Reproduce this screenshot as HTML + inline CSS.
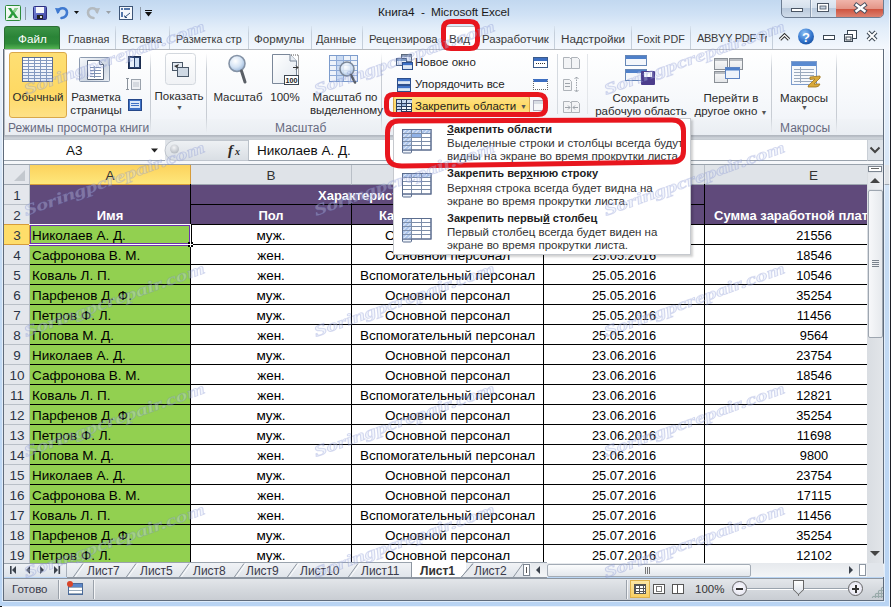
<!DOCTYPE html>
<html><head><meta charset="utf-8">
<style>
*{box-sizing:border-box;margin:0;padding:0}
html,body{width:891px;height:607px;overflow:hidden}
body{position:relative;font-family:"Liberation Sans",sans-serif;font-size:11.5px;color:#1e1e1e;background:#c6d9f0}
.a{position:absolute}
.t{position:absolute;white-space:nowrap}
#frame{left:0;top:0;width:891px;height:607px;background:linear-gradient(#c2d8f0 0px,#cfe1f5 14px,#e2edf9 28px,#f3f7fd 48px,#e4eefa 100px,#c6dcf4 250px,#b9d4f3 607px)}
#title{left:378px;top:5px;font-size:11.8px;letter-spacing:-0.1px;color:#1a1a1a}
.tab{position:absolute;white-space:nowrap;top:32px;font-size:11.7px;color:#3a3a3a}
.tsep{position:absolute;top:26px;width:1px;height:23px;background:linear-gradient(rgba(197,207,219,.3),#c5cfdb 30%,#c5cfdb)}
#ribbon{left:4px;top:49px;width:880px;height:87px;background:linear-gradient(#ffffff,#f6f8fb 60%,#eef2f7);border:1px solid #b6babf;border-bottom:none}
.glab{position:absolute;top:121px;font-size:12px;color:#676a80}
.gsep{position:absolute;top:53px;width:1px;height:80px;background:linear-gradient(rgba(200,205,212,0),#c8cdd4 20%,#c8cdd4 80%,rgba(200,205,212,0))}
.btxt{position:absolute;font-size:11.5px;color:#2a2a2a;text-align:center;line-height:13px;white-space:nowrap;padding-top:1px}
#grid{left:4px;top:164px;width:880px;height:400px;background:#fff}
.ch{position:absolute;top:165px;height:20px;background:#dfe3e8;border-right:1px solid #b9bfc7;border-bottom:1px solid #9ea6b0;font-size:13.5px;color:#333;text-align:center;line-height:22px}
.rh{position:absolute;left:4px;width:26px;height:20px;background:#e4e7ec;border-bottom:1px solid #b9bfc7;border-right:1px solid #b9bfc7;font-size:13.5px;color:#2b3445;text-align:center;line-height:22px;padding-left:1px}
.c{position:absolute;height:20px;font-size:13.5px;line-height:24px;white-space:nowrap;overflow:hidden;color:#000}
.ctr{text-align:center}
.rt{text-align:right;padding-right:57px}
</style></head><body>
<div id="frame" class="a"></div>

<!-- Title bar / QAT -->
<svg class="a" style="left:0;top:0" width="160" height="26" viewBox="0 0 160 26">
<defs>
<linearGradient id="xg" x1="0" y1="0" x2="1" y2="1"><stop offset="0" stop-color="#ffffff"/><stop offset="1" stop-color="#d8ead8"/></linearGradient>
<linearGradient id="sg" x1="0" y1="0" x2="1" y2="1"><stop offset="0" stop-color="#7d8fe0"/><stop offset="1" stop-color="#3b3f9e"/></linearGradient>
</defs>
<rect x="5.5" y="5.5" width="15" height="15" rx="1" fill="url(#xg)" stroke="#2e8b3c"/>
<path d="M8 8 L11 8 L13 11.2 L15 8 L18 8 L14.6 13 L18.2 18 L15 18 L13 14.8 L11 18 L7.8 18 L11.4 13 Z" fill="#2a9a3a"/>
<path d="M15 8 L18 8 L14.6 13 L13 11.2 Z" fill="#8fd18f"/>
<rect x="25" y="7" width="1" height="13" fill="#8e9aa8"/>
<rect x="33.5" y="6.5" width="13" height="13" rx="1" fill="url(#sg)" stroke="#2c2f80"/>
<rect x="36" y="7" width="8" height="6" fill="#f4f6fb"/>
<rect x="37" y="15" width="6" height="4" fill="#222"/>
<rect x="40" y="16" width="2" height="2" fill="#ddd"/>
<path d="M58 12 C58 7.5 67 6.5 67 12.5 C67 15.5 64.5 17.5 61.5 18" fill="none" stroke="#3f79d0" stroke-width="2.6" stroke-linecap="round"/>
<path d="M55 8 L61.5 8.5 L57.5 14 Z" fill="#3f79d0"/>
<path d="M74 11 L79 11 L76.5 14 Z" fill="#111"/>
<path d="M97 12 C97 7.5 88 6.5 88 12.5 C88 15.5 90.5 17.5 93.5 18" fill="none" stroke="#b4babf" stroke-width="2.6" stroke-linecap="round"/>
<path d="M100 8 L93.5 8.5 L97.5 14 Z" fill="#b4babf"/>
<path d="M106 11 L111 11 L108.5 14 Z" fill="#9aa0a6"/>
<rect x="119.5" y="6.5" width="13" height="13" fill="#f6f8fb" stroke="#3d5577"/>
<rect x="121" y="8" width="2" height="2" fill="#5577aa"/><rect x="124" y="8" width="6" height="2" fill="#5577aa"/>
<rect x="121" y="12" width="2" height="5" fill="#5577aa"/>
<path d="M125 17 L130 13" stroke="#33507a" stroke-width="1"/><path d="M124.5 15.5 L125 17.5 L127 17.5" fill="none" stroke="#33507a"/>
<rect x="140" y="7" width="1" height="13" fill="#8e9aa8"/>
<rect x="145" y="10" width="7" height="1" fill="#111"/>
<path d="M145 12 L152 12 L148.5 16.5 Z" fill="#111"/>
</svg>
<div id="title" class="t">Книга4&nbsp; -&nbsp; Microsoft Excel</div>

<!-- window buttons -->
<div class="a" style="left:781px;top:-2px;width:103px;height:20px;border:1px solid #6d7d92;border-radius:0 0 5px 5px;background:linear-gradient(#e4ebf4,#d5e0ec 50%,#b9c9dc 52%,#d0dcea);overflow:hidden">
  <div class="a" style="left:28px;top:0;width:1px;height:20px;background:#8b9bb0;box-shadow:1px 0 0 rgba(255,255,255,.6)"></div>
  <div class="a" style="left:54px;top:0;width:48px;height:20px;background:linear-gradient(#f1b8ae,#e39486 50%,#cf5541 52%,#e08d7c)"></div>
</div>
<svg class="a" style="left:781px;top:0" width="103" height="18" viewBox="0 0 103 18">
<rect x="10.5" y="8.5" width="11" height="3" fill="#fff" stroke="#4a5564"/>
<rect x="36.5" y="3.5" width="11" height="8" fill="#fff" stroke="#4a5564"/>
<rect x="39" y="6" width="6" height="3" fill="#c8d3e0" stroke="#4a5564" stroke-width=".8"/>
<path d="M75.5 5 L83.5 11 M83.5 5 L75.5 11" stroke="#4a5060" stroke-width="4.4" stroke-linecap="square"/>
<path d="M75.5 5 L83.5 11 M83.5 5 L75.5 11" stroke="#fff" stroke-width="2.4" stroke-linecap="square"/>
</svg>
<!-- Tabs -->
<div class="a" style="left:4px;top:26px;width:56px;height:23px;background:linear-gradient(#3d9447,#2a8437 45%,#2f8a3a 75%,#55b552);border:1px solid #2b6f33;border-bottom:none;border-radius:3px 3px 0 0"></div>
<div class="t" style="left:18px;top:32px;color:#fff;font-size:11.7px">Файл</div>
<div class="tab" style="left:68px;transform:scaleX(0.93);transform-origin:0 0">Главная</div>
<div class="tsep" style="left:115px"></div>
<div class="tab" style="left:122px;transform:scaleX(0.92);transform-origin:0 0">Вставка</div>
<div class="tsep" style="left:169px"></div>
<div class="tab" style="left:176px;transform:scaleX(0.92);transform-origin:0 0">Разметка стр</div>
<div class="tsep" style="left:248px"></div>
<div class="tab" style="left:254px;transform:scaleX(0.99);transform-origin:0 0">Формулы</div>
<div class="tsep" style="left:311px"></div>
<div class="tab" style="left:316px;transform:scaleX(0.95);transform-origin:0 0">Данные</div>
<div class="tsep" style="left:362px"></div>
<div class="tab" style="left:369px;transform:scaleX(0.97);transform-origin:0 0">Рецензирова</div>
<div class="a" style="left:444px;top:26px;width:34px;height:24px;background:#fff;border:1px solid #b6babf;border-bottom:none;border-radius:2px 2px 0 0"></div>
<div class="tab" style="left:449px">Вид</div>
<div class="tab" style="left:482px;transform:scaleX(0.98);transform-origin:0 0">Разработчик</div>
<div class="tsep" style="left:554px"></div>
<div class="tab" style="left:561px">Надстройки</div>
<div class="tsep" style="left:631px"></div>
<div class="tab" style="left:637px;transform:scaleX(0.92);transform-origin:0 0">Foxit PDF</div>
<div class="tsep" style="left:690px"></div>
<div class="tab" style="left:697px;width:70px;overflow:hidden;font-size:11px;letter-spacing:-0.3px">ABBYY PDF Transformer</div>
<div class="tsep" style="left:772px"></div>
<!-- right tab icons -->
<svg class="a" style="left:776px;top:26px" width="108" height="22" viewBox="0 0 108 22">
<path d="M4 13.5 L8.5 9 L13 13.5" fill="none" stroke="#333" stroke-width="3.2" stroke-linejoin="miter"/>
<path d="M4 13.5 L8.5 9 L13 13.5" fill="none" stroke="#fff" stroke-width="1.2"/>
<defs><radialGradient id="hg" cx=".4" cy=".3" r=".7"><stop offset="0" stop-color="#8cc0f4"/><stop offset=".7" stop-color="#3274cc"/><stop offset="1" stop-color="#1f58a8"/></radialGradient></defs>
<circle cx="30" cy="10.5" r="8" fill="url(#hg)"/>
<text x="26" y="15.5" font-family="Liberation Sans" font-weight="bold" font-size="13" fill="#fff">?</text>
<rect x="47.5" y="9.5" width="11" height="4" fill="#fff" stroke="#3a4652"/>
<rect x="71.5" y="4.5" width="9" height="8" fill="#fff" stroke="#3a4652"/>
<rect x="68.5" y="8.5" width="8" height="7" fill="#fff" stroke="#3a4652"/>
<rect x="70" y="11" width="5" height="3" fill="none" stroke="#3a4652"/>
<path d="M92 6 L100 14 M100 6 L92 14" stroke="#3a4652" stroke-width="4"/>
<path d="M92 6 L100 14 M100 6 L92 14" stroke="#fff" stroke-width="2"/>
</svg>
<!-- Ribbon -->
<div id="ribbon" class="a"></div>
<div class="a" style="left:5px;top:119px;width:878px;height:17px;background:linear-gradient(#f0f3f7,#e9edf2)"></div>
<div class="a" style="left:4px;top:135px;width:880px;height:5px;background:linear-gradient(#aab0b8,#d0d5dc 40%,#c5cbd3)"></div>

<div class="gsep" style="left:150px"></div>
<div class="gsep" style="left:206px"></div>
<div class="gsep" style="left:381px"></div>
<div class="gsep" style="left:771px"></div>
<div class="gsep" style="left:836px"></div>
<div class="a" style="left:557px;top:54px;width:1px;height:60px;background:#d5dae0"></div>
<div class="a" style="left:587px;top:54px;width:1px;height:60px;background:#e3e6ea"></div>

<!-- group 1 -->
<div class="a" style="left:9px;top:52px;width:58px;height:66px;border:1px solid #d9a84a;border-radius:3px;background:linear-gradient(#fedf74,#fed964 60%,#fee187)"></div>
<svg class="a" style="left:20px;top:55px" width="125" height="60" viewBox="0 0 125 60">
<defs>
<linearGradient id="ng" x1="0" y1="0" x2="0" y2="1"><stop offset="0" stop-color="#ffffff"/><stop offset="1" stop-color="#e4ecf7"/></linearGradient>
<linearGradient id="pg" x1="0" y1="0" x2="1" y2="1"><stop offset="0" stop-color="#f7f9fc"/><stop offset=".6" stop-color="#cdd6e2"/><stop offset="1" stop-color="#e9eef4"/></linearGradient>
</defs>
<rect x="2.5" y="2.5" width="30" height="24" fill="url(#ng)" stroke="#5c6e90"/>
<g stroke="#8299c0" stroke-width="1">
<line x1="8.5" y1="3" x2="8.5" y2="26"/><line x1="14.5" y1="3" x2="14.5" y2="26"/><line x1="20.5" y1="3" x2="20.5" y2="26"/><line x1="26.5" y1="3" x2="26.5" y2="26"/>
<line x1="3" y1="5.5" x2="32" y2="5.5"/><line x1="3" y1="8.5" x2="32" y2="8.5"/><line x1="3" y1="11.5" x2="32" y2="11.5"/><line x1="3" y1="14.5" x2="32" y2="14.5"/><line x1="3" y1="17.5" x2="32" y2="17.5"/><line x1="3" y1="20.5" x2="32" y2="20.5"/><line x1="3" y1="23.5" x2="32" y2="23.5"/>
</g>
<rect x="59.5" y="2.5" width="30" height="24" rx="1" fill="url(#pg)" stroke="#8d9bb0"/>
<path d="M67.5 5.5 L79.5 5.5 L83.5 9.5 L83.5 24.5 L67.5 24.5 Z" fill="#fff" stroke="#59677c"/>
<path d="M79.5 5.5 L79.5 9.5 L83.5 9.5" fill="#dfe6ef" stroke="#59677c"/>
<g stroke="#7f92b3"><line x1="70" y1="12.5" x2="81" y2="12.5"/><line x1="70" y1="15.5" x2="81" y2="15.5"/><line x1="70" y1="18.5" x2="81" y2="18.5"/><line x1="70" y1="21.5" x2="81" y2="21.5"/><line x1="74.5" y1="11" x2="74.5" y2="23"/></g>
<rect x="108.5" y="1.5" width="12" height="12" fill="#29416e" stroke="#1b2c4f"/>
<rect x="110" y="3" width="4" height="9" fill="#e8f0fb"/><rect x="115" y="3" width="4" height="9" fill="#cfe0f5"/>
<rect x="111.5" y="24.5" width="9" height="10" fill="#eef0f3" stroke="#9aa2ac"/><rect x="113" y="27" width="6" height="5" fill="#d5d9df"/>
<path d="M107.5 23 L107.5 35 M106 23.5 L109 23.5 M106 34.5 L109 34.5" stroke="#8a929c"/>
<rect x="108.5" y="44.5" width="13" height="11" fill="#3d70c4" stroke="#25478a"/>
<rect x="110" y="46" width="10" height="7" fill="#dbe8f8"/>
<g stroke="#3d70c4"><line x1="111" y1="48.5" x2="119" y2="48.5"/><line x1="111" y1="50.5" x2="119" y2="50.5"/></g>
</svg>
<div class="btxt" style="left:9px;top:90px;width:58px">Обычный</div>
<div class="btxt" style="left:67px;top:90px;width:58px">Разметка<br>страницы</div>
<div class="glab" style="left:8px">Режимы просмотра книги</div>

<!-- group 2 -->
<svg class="a" style="left:160px;top:50px" width="205" height="38" viewBox="0 0 205 38">
<defs>
<linearGradient id="sb" x1="0" y1="0" x2="0" y2="1"><stop offset="0" stop-color="#ffffff"/><stop offset="1" stop-color="#f0f2f5"/></linearGradient>
<radialGradient id="lens" cx=".4" cy=".35" r=".65"><stop offset="0" stop-color="#ffffff"/><stop offset=".6" stop-color="#d4e3f4"/><stop offset="1" stop-color="#9fbadb"/></radialGradient>
<linearGradient id="pg2" x1="0" y1="0" x2="1" y2="1"><stop offset="0" stop-color="#ffffff"/><stop offset="1" stop-color="#e3e9f0"/></linearGradient>
</defs>
<rect x="5.5" y="3.5" width="30" height="31" rx="3" fill="url(#sb)" stroke="#d3d8de"/>
<rect x="12.5" y="12.5" width="10" height="8" fill="#e4eaf1" stroke="#4a5868"/>
<rect x="17.5" y="17.5" width="11" height="9" fill="#cfd9e4" stroke="#4a5868"/>
<path d="M14 16 L19 14 L17 18 Z" fill="#333"/>
<circle cx="77" cy="13.5" r="8" fill="url(#lens)" stroke="#8593a6" stroke-width="1.6"/>
<path d="M81.5 21 L85 32" stroke="#5a5f66" stroke-width="3" stroke-linecap="round"/>
<path d="M112.5 4.5 L130 4.5 L136.5 11 L136.5 33.5 L112.5 33.5 Z" fill="url(#pg2)" stroke="#7a8799"/>
<path d="M130 4.5 L130 11 L136.5 11" fill="#e8edf3" stroke="#7a8799"/>
<path d="M131 5 L138.5 5 L138.5 33.5" fill="none" stroke="#555" stroke-dasharray="1 1"/>
<path d="M133 17.5 L138 17.5 M136 15.5 L138 17.5 L136 19.5" stroke="#333" fill="none"/>
<rect x="124.5" y="25.5" width="14" height="9" fill="#fff" stroke="#3d4652"/>
<text x="125.5" y="32.8" font-family="Liberation Sans" font-size="7.2" font-weight="bold" fill="#222" textLength="12" lengthAdjust="spacingAndGlyphs">100</text>
<rect x="169.5" y="5.5" width="28" height="26" fill="#eef3fa" stroke="#7d9ccc"/>
<rect x="176" y="6" width="7" height="25" fill="#c9daf2"/>
<g stroke="#8eaad6"><line x1="176.5" y1="6" x2="176.5" y2="31"/><line x1="183.5" y1="6" x2="183.5" y2="31"/><line x1="190.5" y1="6" x2="190.5" y2="31"/><line x1="170" y1="10.5" x2="197" y2="10.5"/><line x1="170" y1="15.5" x2="197" y2="15.5"/><line x1="170" y1="20.5" x2="197" y2="20.5"/><line x1="170" y1="25.5" x2="197" y2="25.5"/></g>
<circle cx="187" cy="19" r="7" fill="url(#lens)" fill-opacity=".85" stroke="#7b8798" stroke-width="1.5"/>
<path d="M191 25 L195 32.5" stroke="#5a5f66" stroke-width="2.6" stroke-linecap="round"/>
</svg>
<div class="btxt" style="left:151px;top:89px;width:56px">Показать</div>
<div class="t" style="left:176px;top:104px;font-size:7px;color:#555">&#9660;</div>

<!-- group 3 -->
<div class="btxt" style="left:210px;top:90px;width:56px">Масштаб</div>
<div class="btxt" style="left:266px;top:90px;width:38px">100%</div>
<div class="btxt" style="left:310px;top:90px;width:70px">Масштаб по<br>выделенному</div>
<div class="glab" style="left:275px">Масштаб</div>

<!-- group 4 -->
<svg class="a" style="left:394px;top:53px" width="20" height="40" viewBox="0 0 20 40">
<defs><linearGradient id="wb" x1="0" y1="0" x2="0" y2="1"><stop offset="0" stop-color="#ffffff"/><stop offset="1" stop-color="#cfdcee"/></linearGradient></defs>
<rect x="7.5" y="1.5" width="10" height="7" fill="url(#wb)" stroke="#5c6a7c"/><rect x="8" y="2" width="9" height="2" fill="#8a9ab0"/>
<rect x="2.5" y="5.5" width="10" height="7" fill="url(#wb)" stroke="#4f6485"/><rect x="3" y="6" width="9" height="2" fill="#7f9cc6"/>
<rect x="8.5" y="9.5" width="10" height="7" fill="url(#wb)" stroke="#2d4f8c"/><rect x="9" y="10" width="9" height="2.2" fill="#3f72c8"/>
<rect x="3.5" y="25.5" width="13" height="6" fill="url(#wb)" stroke="#2d4f8c"/><rect x="4" y="26" width="12" height="2.2" fill="#3f72c8"/>
<rect x="3.5" y="32.5" width="13" height="6" fill="url(#wb)" stroke="#2d4f8c"/><rect x="4" y="33" width="12" height="2.2" fill="#3f72c8"/>
</svg>
<div class="t" style="left:415px;top:56px">Новое окно</div>
<div class="t" style="left:415px;top:78px">Упорядочить все</div>
<div class="a" style="left:533px;top:57px;width:15px;height:11px;border:1px solid #3a5a8a;background:linear-gradient(#3d6fc2 0 3px,#fff 3px)"></div>
<div class="a" style="left:536px;top:63px;width:9px;height:1px;border-top:1px dotted #333"></div>
<div class="a" style="left:533px;top:79px;width:15px;height:11px;border:1px dotted #666;border-top:3px solid #3d6fc2;background:#fff"></div>
<div class="a" style="left:533px;top:100px;width:15px;height:11px;border:1px solid #aab;background:linear-gradient(#d8dde4 0 3px,#f6f7f9 3px)"></div>
<svg class="a" style="left:562px;top:55px" width="22" height="60" viewBox="0 0 22 60">
<g fill="#f3f4f6" stroke="#aeb3b9">
<path d="M1.5 2.5 L7.5 2.5 L9.5 4.5 L9.5 13.5 L1.5 13.5 Z"/><path d="M9.5 2.5 L15.5 2.5 L17.5 4.5 L17.5 13.5 L9.5 13.5 Z"/>
<path d="M1.5 24.5 L7.5 24.5 L9.5 26.5 L9.5 35.5 L1.5 35.5 Z"/>
<path d="M1.5 46.5 L7.5 46.5 L9.5 48.5 L9.5 57.5 L1.5 57.5 Z"/><path d="M9.5 46.5 L15.5 46.5 L17.5 48.5 L17.5 57.5 L9.5 57.5 Z"/>
</g>
<g stroke="#9da3aa" fill="none"><line x1="3" y1="28.5" x2="8" y2="28.5"/><line x1="3" y1="31.5" x2="8" y2="31.5"/><line x1="14.5" y1="22" x2="14.5" y2="37" stroke-dasharray="1.5 1"/><path d="M12.5 24 L14.5 22 L16.5 24 M12.5 35 L14.5 37 L16.5 35"/>
<path d="M3 52.5 L8 52.5 M6 50.5 L8 52.5 L6 54.5 M16 52.5 L11 52.5 M13 50.5 L11 52.5 L13 54.5"/></g>
</svg>
<div class="a" style="left:625px;top:55px;width:22px;height:11px;border:1px solid #6687b7;background:linear-gradient(#4f80c9 0 3px,#f3f6fb 3px)"></div>
<div class="a" style="left:625px;top:69px;width:22px;height:12px;border:1px solid #6687b7;background:linear-gradient(#4f80c9 0 3px,#f3f6fb 3px)"></div>
<div class="a" style="left:641px;top:71px;width:14px;height:14px;background:#4c3d8c;border-radius:1px"></div>
<div class="a" style="left:644px;top:72px;width:8px;height:5px;background:#fff"></div>
<div class="btxt" style="left:593px;top:91px;width:96px">Сохранить<br>рабочую область</div>
<div class="btxt" style="left:690px;top:91px;width:82px">Перейти в<br>другое окно <span style="font-size:7px;color:#555">&#9660;</span></div>

<!-- group 5 -->
<svg class="a" style="left:712px;top:56px" width="112" height="32" viewBox="0 0 112 32">
<defs><linearGradient id="gw" x1="0" y1="0" x2="0" y2="1"><stop offset="0" stop-color="#fafafa"/><stop offset="1" stop-color="#e4e6e9"/></linearGradient></defs>
<g stroke="#8a8f96"><rect x="2.5" y="2.5" width="13" height="11" fill="url(#gw)"/><rect x="17.5" y="2.5" width="13" height="11" fill="url(#gw)"/><rect x="2.5" y="15.5" width="13" height="11" fill="url(#gw)"/></g>
<g fill="#b9bdc3"><rect x="3" y="3" width="12" height="2"/><rect x="18" y="3" width="12" height="2"/><rect x="3" y="16" width="12" height="2"/></g>
<rect x="13.5" y="11.5" width="14" height="11" fill="#eef3fb" stroke="#5d84c4"/><rect x="14" y="12" width="13" height="2.5" fill="#4f80c9"/>
<rect x="79.5" y="5.5" width="25" height="23" fill="#f7f9fc" stroke="#7d9ccc"/><rect x="80" y="6" width="24" height="4" fill="#5a8ad0"/>
<g stroke="#9aa9bd"><line x1="82" y1="13.5" x2="102" y2="13.5"/><line x1="82" y1="16.5" x2="102" y2="16.5"/><line x1="82" y1="19.5" x2="102" y2="19.5"/><line x1="82" y1="22.5" x2="102" y2="22.5"/><line x1="82" y1="25.5" x2="102" y2="25.5"/><line x1="88.5" y1="11" x2="88.5" y2="27"/></g>
<path d="M98 21 L108 20 Q109 22 106 24 L102 28 L108 28 Q107 31 104 31 L96 31 Q96 29 99 27 L103 23 L98 23.5 Z" fill="#d9a93a" stroke="#9c7420" stroke-width=".8"/>
</svg>
<div class="btxt" style="left:772px;top:91px;width:64px">Макросы</div>
<div class="t" style="left:801px;top:104px;font-size:7px;color:#555">&#9660;</div>
<div class="glab" style="left:780px">Макросы</div>

<!-- Formula bar -->
<div class="a" style="left:4px;top:136px;width:879px;height:4px;background:linear-gradient(#b3b9c1,#cfd4da 50%,#c3c9d0)"></div>
<div class="a" style="left:4px;top:140px;width:879px;height:24px;background:#dfe3e8"></div>
<div class="a" style="left:4px;top:140px;width:161px;height:21px;background:#fff;border-bottom:1px solid #9aa3ad"></div>
<div class="t" style="left:66px;top:143px;font-size:13.5px;color:#111">A3</div>
<svg class="a" style="left:140px;top:140px" width="110" height="21" viewBox="0 0 110 21">
<path d="M11 8.5 L18 8.5 L14.5 12.5 Z" fill="#222"/>
<defs><linearGradient id="pill" x1="0" y1="0" x2="0" y2="1"><stop offset="0" stop-color="#eef1f4"/><stop offset="1" stop-color="#d9dee4"/></linearGradient>
<radialGradient id="dot" cx=".45" cy=".35" r=".6"><stop offset="0" stop-color="#f4f5f7"/><stop offset="1" stop-color="#b9bec5"/></radialGradient></defs>
<path d="M108 0.5 L35 0.5 A10 10 0 0 0 35 20.5 L108 20.5" fill="url(#pill)" stroke="#c0c6ce"/>
<circle cx="34.5" cy="9" r="4.5" fill="url(#dot)"/>
<text x="88" y="15" font-family="Liberation Serif" font-style="italic" font-weight="bold" font-size="15" fill="#2a2a2a">f</text>
<text x="95" y="15" font-family="Liberation Serif" font-style="italic" font-weight="bold" font-size="10" fill="#2a2a2a">x</text>
</svg>
<div class="a" style="left:248px;top:140px;width:619px;height:21px;background:#fff;border-bottom:1px solid #9aa3ad;border-left:1px solid #b9c0c8"></div>
<div class="t" style="left:257px;top:143px;font-size:13.5px;color:#111">Николаев А. Д.</div>
<div class="a" style="left:867px;top:140px;width:16px;height:21px;background:#dde2e8;border-left:1px solid #c9cfd6;border-bottom:1px solid #9aa3ad"></div>
<svg class="a" style="left:867px;top:140px" width="16" height="21" viewBox="0 0 16 21"><path d="M3.5 7.5 L8 12 L12.5 7.5" fill="none" stroke="#444" stroke-width="2"/></svg>
<div class="a" style="left:4px;top:161px;width:879px;height:3px;background:#f5f7fa"></div>

<!-- Grid -->
<div id="grid" class="a"></div>
<div class="a" style="left:4px;top:164px;width:880px;height:1px;background:#9aa3ad"></div>
<div class="ch" style="left:4px;width:26px;background:#e4e7ec"></div>
<div class="a" style="left:14px;top:170px;width:0;height:0;border-left:11px solid transparent;border-bottom:11px solid #c3c8ce"></div>
<div class="ch" style="left:30px;width:161px;background:linear-gradient(#fcd25c,#fee77c);border-right:1px solid #d69c3a;border-bottom:1px solid #d69c3a;color:#333">A</div>
<div class="ch" style="left:191px;width:161px">B</div>
<div class="ch" style="left:352px;width:192px">C</div>
<div class="ch" style="left:544px;width:161px">D</div>
<div class="ch" style="left:705px;width:218px">E</div>

<div id="rows">
<div class="rh" style="top:185px">1</div>
<div class="rh" style="top:205px">2</div>
<div class="rh" style="top:224px;height:21px;background:#fedd6a;border:1px solid #d69c3a;border-left:none;line-height:21px">3</div>
<div class="rh" style="top:245px">4</div>
<div class="rh" style="top:265px">5</div>
<div class="rh" style="top:285px">6</div>
<div class="rh" style="top:305px">7</div>
<div class="rh" style="top:325px">8</div>
<div class="rh" style="top:345px">9</div>
<div class="rh" style="top:365px">10</div>
<div class="rh" style="top:385px">11</div>
<div class="rh" style="top:405px">12</div>
<div class="rh" style="top:425px">13</div>
<div class="rh" style="top:445px">14</div>
<div class="rh" style="top:465px">15</div>
<div class="rh" style="top:485px">16</div>
<div class="rh" style="top:505px">17</div>
<div class="rh" style="top:525px">18</div>
<div class="rh" style="top:545px">19</div>
<div class="a" style="left:30px;top:185px;width:837px;height:40px;background:#604a7b"></div>
<div class="a" style="left:190px;top:184px;width:1px;height:40px;background:#000"></div>
<div class="a" style="left:191px;top:204px;width:513px;height:1px;background:#000"></div>
<div class="a" style="left:704px;top:184px;width:1px;height:40px;background:#000"></div>
<div class="a" style="left:351px;top:203px;width:1px;height:21px;background:#000"></div>
<div class="a" style="left:543px;top:203px;width:1px;height:21px;background:#000"></div>
<div class="a" style="left:704px;top:203px;width:1px;height:21px;background:#000"></div>
<div class="t" style="left:318px;top:184px;font-size:13px;font-weight:bold;color:#fff;line-height:23px">Характеристики работников</div>
<div class="t" style="left:29px;top:204px;width:162px;text-align:center;font-size:13px;font-weight:bold;color:#fff;line-height:23px">Имя</div>
<div class="t" style="left:191px;top:204px;width:160px;text-align:center;font-size:13px;font-weight:bold;color:#fff;line-height:23px">Пол</div>
<div class="t" style="left:351px;top:204px;width:194px;text-align:center;font-size:13px;font-weight:bold;color:#fff;line-height:23px">Категория персонала</div>
<div class="t" style="left:545px;top:204px;width:160px;text-align:center;font-size:13px;font-weight:bold;color:#fff;line-height:23px">Дата</div>
<div class="t" style="left:714px;top:204px;width:153px;overflow:hidden;font-size:13px;font-weight:bold;color:#fff;line-height:23px">Сумма заработной платы</div>
<div class="a" style="left:30px;top:224px;width:161px;height:340px;background:#92d050"></div>
<div class="c" style="left:32px;top:224px">Николаев А. Д.</div>
<div class="c ctr" style="left:191px;top:224px;width:160px">муж.</div>
<div class="c ctr" style="left:352px;top:224px;width:191px">Основной персонал</div>
<div class="c ctr" style="left:544px;top:224px;width:160px;font-size:12.8px">25.05.2016</div>
<div class="c ctr" style="left:705px;top:224px;width:218px;font-size:12.8px;clip-path:inset(0 56px 0 0)">21556</div>
<div class="c" style="left:32px;top:244px">Сафронова В. М.</div>
<div class="c ctr" style="left:191px;top:244px;width:160px">жен.</div>
<div class="c ctr" style="left:352px;top:244px;width:191px">Основной персонал</div>
<div class="c ctr" style="left:544px;top:244px;width:160px;font-size:12.8px">25.05.2016</div>
<div class="c ctr" style="left:705px;top:244px;width:218px;font-size:12.8px;clip-path:inset(0 56px 0 0)">18546</div>
<div class="c" style="left:32px;top:264px">Коваль Л. П.</div>
<div class="c ctr" style="left:191px;top:264px;width:160px">жен.</div>
<div class="c ctr" style="left:352px;top:264px;width:191px">Вспомогательный персонал</div>
<div class="c ctr" style="left:544px;top:264px;width:160px;font-size:12.8px">25.05.2016</div>
<div class="c ctr" style="left:705px;top:264px;width:218px;font-size:12.8px;clip-path:inset(0 56px 0 0)">10546</div>
<div class="c" style="left:32px;top:284px">Парфенов Д. Ф.</div>
<div class="c ctr" style="left:191px;top:284px;width:160px">муж.</div>
<div class="c ctr" style="left:352px;top:284px;width:191px">Основной персонал</div>
<div class="c ctr" style="left:544px;top:284px;width:160px;font-size:12.8px">25.05.2016</div>
<div class="c ctr" style="left:705px;top:284px;width:218px;font-size:12.8px;clip-path:inset(0 56px 0 0)">35254</div>
<div class="c" style="left:32px;top:304px">Петров Ф. Л.</div>
<div class="c ctr" style="left:191px;top:304px;width:160px">муж.</div>
<div class="c ctr" style="left:352px;top:304px;width:191px">Основной персонал</div>
<div class="c ctr" style="left:544px;top:304px;width:160px;font-size:12.8px">25.05.2016</div>
<div class="c ctr" style="left:705px;top:304px;width:218px;font-size:12.8px;clip-path:inset(0 56px 0 0)">11456</div>
<div class="c" style="left:32px;top:324px">Попова М. Д.</div>
<div class="c ctr" style="left:191px;top:324px;width:160px">жен.</div>
<div class="c ctr" style="left:352px;top:324px;width:191px">Вспомогательный персонал</div>
<div class="c ctr" style="left:544px;top:324px;width:160px;font-size:12.8px">25.05.2016</div>
<div class="c ctr" style="left:705px;top:324px;width:218px;font-size:12.8px;clip-path:inset(0 56px 0 0)">9564</div>
<div class="c" style="left:32px;top:344px">Николаев А. Д.</div>
<div class="c ctr" style="left:191px;top:344px;width:160px">муж.</div>
<div class="c ctr" style="left:352px;top:344px;width:191px">Основной персонал</div>
<div class="c ctr" style="left:544px;top:344px;width:160px;font-size:12.8px">23.06.2016</div>
<div class="c ctr" style="left:705px;top:344px;width:218px;font-size:12.8px;clip-path:inset(0 56px 0 0)">23754</div>
<div class="c" style="left:32px;top:364px">Сафронова В. М.</div>
<div class="c ctr" style="left:191px;top:364px;width:160px">жен.</div>
<div class="c ctr" style="left:352px;top:364px;width:191px">Основной персонал</div>
<div class="c ctr" style="left:544px;top:364px;width:160px;font-size:12.8px">23.06.2016</div>
<div class="c ctr" style="left:705px;top:364px;width:218px;font-size:12.8px;clip-path:inset(0 56px 0 0)">18546</div>
<div class="c" style="left:32px;top:384px">Коваль Л. П.</div>
<div class="c ctr" style="left:191px;top:384px;width:160px">жен.</div>
<div class="c ctr" style="left:352px;top:384px;width:191px">Вспомогательный персонал</div>
<div class="c ctr" style="left:544px;top:384px;width:160px;font-size:12.8px">23.06.2016</div>
<div class="c ctr" style="left:705px;top:384px;width:218px;font-size:12.8px;clip-path:inset(0 56px 0 0)">12821</div>
<div class="c" style="left:32px;top:404px">Парфенов Д. Ф.</div>
<div class="c ctr" style="left:191px;top:404px;width:160px">муж.</div>
<div class="c ctr" style="left:352px;top:404px;width:191px">Основной персонал</div>
<div class="c ctr" style="left:544px;top:404px;width:160px;font-size:12.8px">23.06.2016</div>
<div class="c ctr" style="left:705px;top:404px;width:218px;font-size:12.8px;clip-path:inset(0 56px 0 0)">35254</div>
<div class="c" style="left:32px;top:424px">Петров Ф. Л.</div>
<div class="c ctr" style="left:191px;top:424px;width:160px">муж.</div>
<div class="c ctr" style="left:352px;top:424px;width:191px">Основной персонал</div>
<div class="c ctr" style="left:544px;top:424px;width:160px;font-size:12.8px">23.06.2016</div>
<div class="c ctr" style="left:705px;top:424px;width:218px;font-size:12.8px;clip-path:inset(0 56px 0 0)">11698</div>
<div class="c" style="left:32px;top:444px">Попова М. Д.</div>
<div class="c ctr" style="left:191px;top:444px;width:160px">жен.</div>
<div class="c ctr" style="left:352px;top:444px;width:191px">Вспомогательный персонал</div>
<div class="c ctr" style="left:544px;top:444px;width:160px;font-size:12.8px">23.06.2016</div>
<div class="c ctr" style="left:705px;top:444px;width:218px;font-size:12.8px;clip-path:inset(0 56px 0 0)">9800</div>
<div class="c" style="left:32px;top:464px">Николаев А. Д.</div>
<div class="c ctr" style="left:191px;top:464px;width:160px">муж.</div>
<div class="c ctr" style="left:352px;top:464px;width:191px">Основной персонал</div>
<div class="c ctr" style="left:544px;top:464px;width:160px;font-size:12.8px">25.07.2016</div>
<div class="c ctr" style="left:705px;top:464px;width:218px;font-size:12.8px;clip-path:inset(0 56px 0 0)">23754</div>
<div class="c" style="left:32px;top:484px">Сафронова В. М.</div>
<div class="c ctr" style="left:191px;top:484px;width:160px">жен.</div>
<div class="c ctr" style="left:352px;top:484px;width:191px">Основной персонал</div>
<div class="c ctr" style="left:544px;top:484px;width:160px;font-size:12.8px">25.07.2016</div>
<div class="c ctr" style="left:705px;top:484px;width:218px;font-size:12.8px;clip-path:inset(0 56px 0 0)">17115</div>
<div class="c" style="left:32px;top:504px">Коваль Л. П.</div>
<div class="c ctr" style="left:191px;top:504px;width:160px">жен.</div>
<div class="c ctr" style="left:352px;top:504px;width:191px">Вспомогательный персонал</div>
<div class="c ctr" style="left:544px;top:504px;width:160px;font-size:12.8px">25.07.2016</div>
<div class="c ctr" style="left:705px;top:504px;width:218px;font-size:12.8px;clip-path:inset(0 56px 0 0)">11456</div>
<div class="c" style="left:32px;top:524px">Парфенов Д. Ф.</div>
<div class="c ctr" style="left:191px;top:524px;width:160px">муж.</div>
<div class="c ctr" style="left:352px;top:524px;width:191px">Основной персонал</div>
<div class="c ctr" style="left:544px;top:524px;width:160px;font-size:12.8px">25.07.2016</div>
<div class="c ctr" style="left:705px;top:524px;width:218px;font-size:12.8px;clip-path:inset(0 56px 0 0)">35254</div>
<div class="c" style="left:32px;top:544px">Петров Ф. Л.</div>
<div class="c ctr" style="left:191px;top:544px;width:160px">муж.</div>
<div class="c ctr" style="left:352px;top:544px;width:191px">Основной персонал</div>
<div class="c ctr" style="left:544px;top:544px;width:160px;font-size:12.8px">25.07.2016</div>
<div class="c ctr" style="left:705px;top:544px;width:218px;font-size:12.8px;clip-path:inset(0 56px 0 0)">12102</div>
<div class="a" style="left:30px;top:224px;width:837px;height:1px;background:#000"></div>
<div class="a" style="left:30px;top:244px;width:837px;height:1px;background:#000"></div>
<div class="a" style="left:30px;top:264px;width:837px;height:1px;background:#000"></div>
<div class="a" style="left:30px;top:284px;width:837px;height:1px;background:#000"></div>
<div class="a" style="left:30px;top:304px;width:837px;height:1px;background:#000"></div>
<div class="a" style="left:30px;top:324px;width:837px;height:1px;background:#000"></div>
<div class="a" style="left:30px;top:344px;width:837px;height:1px;background:#000"></div>
<div class="a" style="left:30px;top:364px;width:837px;height:1px;background:#000"></div>
<div class="a" style="left:30px;top:384px;width:837px;height:1px;background:#000"></div>
<div class="a" style="left:30px;top:404px;width:837px;height:1px;background:#000"></div>
<div class="a" style="left:30px;top:424px;width:837px;height:1px;background:#000"></div>
<div class="a" style="left:30px;top:444px;width:837px;height:1px;background:#000"></div>
<div class="a" style="left:30px;top:464px;width:837px;height:1px;background:#000"></div>
<div class="a" style="left:30px;top:484px;width:837px;height:1px;background:#000"></div>
<div class="a" style="left:30px;top:504px;width:837px;height:1px;background:#000"></div>
<div class="a" style="left:30px;top:524px;width:837px;height:1px;background:#000"></div>
<div class="a" style="left:30px;top:544px;width:837px;height:1px;background:#000"></div>
<div class="a" style="left:30px;top:564px;width:837px;height:1px;background:#000"></div>
<div class="a" style="left:190px;top:224px;width:1px;height:341px;background:#000"></div>
<div class="a" style="left:351px;top:224px;width:1px;height:341px;background:#000"></div>
<div class="a" style="left:543px;top:224px;width:1px;height:341px;background:#000"></div>
<div class="a" style="left:704px;top:224px;width:1px;height:341px;background:#000"></div>
<div class="a" style="left:29px;top:224px;width:162px;height:1px;background:#fff"></div>
<div class="a" style="left:30px;top:225px;width:160px;height:1px;background:#6d2faf"></div>
<div class="a" style="left:30px;top:225px;width:1px;height:19px;background:#6d2faf"></div>
<div class="a" style="left:189px;top:225px;width:1px;height:19px;background:#6d2faf"></div>
<div class="a" style="left:190px;top:224px;width:1px;height:21px;background:#fff"></div>
<div class="a" style="left:191px;top:225px;width:1px;height:17px;background:#000"></div>
<div class="a" style="left:30px;top:243px;width:160px;height:1px;background:#6d2faf"></div>
<div class="a" style="left:29px;top:244px;width:159px;height:1px;background:#fff"></div>
<div class="a" style="left:29px;top:245px;width:159px;height:1px;background:#6d2faf"></div>
<div class="a" style="left:188px;top:242px;width:5px;height:5px;background:#000"></div>
<div class="a" style="left:190px;top:242px;width:1px;height:5px;background:#fff"></div>
<div class="a" style="left:188px;top:244px;width:5px;height:1px;background:#fff"></div>
</div><!--/rows-->

<!-- Scrollbar vertical -->
<div class="a" style="left:867px;top:165px;width:16px;height:398px;background:linear-gradient(90deg,#d9dde2,#e2e5e9)"></div>


<div class="a" style="left:2px;top:49px;width:1px;height:552px;background:rgba(255,255,255,.55)"></div><div class="a" style="left:3px;top:49px;width:1px;height:552px;background:#5f6b7b"></div>
<div class="a" style="left:883px;top:49px;width:1px;height:552px;background:#5f6b7b"></div>
<!-- Sheet tabs -->
<div class="a" style="left:4px;top:564px;width:880px;height:13px;background:linear-gradient(#eef1f5,#dde3ea)"></div>
<div class="a" style="left:4px;top:563px;width:880px;height:1px;background:#9aa3ad"></div>
<svg class="a" style="left:4px;top:563px" width="62" height="14" viewBox="0 0 62 14">
<g fill="#3a414b"><rect x="6" y="3" width="1.6" height="8"/><path d="M12 3 L8 7 L12 11 Z"/><path d="M26 3 L22 7 L26 11 Z"/><path d="M36 3 L40 7 L36 11 Z"/><path d="M50 3 L54 7 L50 11 Z"/><rect x="54.5" y="3" width="1.6" height="8"/></g>
</svg>
<div class="a" style="left:66px;top:564px;width:1px;height:13px;background:#a8b0ba"></div>
<svg class="a" style="left:67px;top:562px" width="480" height="16" viewBox="0 0 480 16">
<defs><linearGradient id="tg" x1="0" y1="0" x2="0" y2="1"><stop offset="0" stop-color="#f1f3f6"/><stop offset="1" stop-color="#dfe4ea"/></linearGradient></defs>
<rect x="0" y="0" width="480" height="16" fill="url(#tg)"/>
<line x1="0" y1="0.5" x2="480" y2="0.5" stroke="#9aa3ad"/>
<path d="M6 15.5 L16 1.5" stroke="#8d96a1" fill="none"/><path d="M8 15.5 L18 1.5" stroke="#fff" fill="none" opacity=".8"/><text x="20" y="12.5" font-family="Liberation Sans" font-size="12" fill="#3a3a4a">Лист7</text><path d="M59 15.5 L69 1.5" stroke="#8d96a1" fill="none"/><path d="M61 15.5 L71 1.5" stroke="#fff" fill="none" opacity=".8"/><text x="73" y="12.5" font-family="Liberation Sans" font-size="12" fill="#3a3a4a">Лист5</text><path d="M112 15.5 L122 1.5" stroke="#8d96a1" fill="none"/><path d="M114 15.5 L124 1.5" stroke="#fff" fill="none" opacity=".8"/><text x="126" y="12.5" font-family="Liberation Sans" font-size="12" fill="#3a3a4a">Лист8</text><path d="M167 15.5 L177 1.5" stroke="#8d96a1" fill="none"/><path d="M169 15.5 L179 1.5" stroke="#fff" fill="none" opacity=".8"/><text x="179" y="12.5" font-family="Liberation Sans" font-size="12" fill="#3a3a4a">Лист9</text><path d="M220 15.5 L230 1.5" stroke="#8d96a1" fill="none"/><path d="M222 15.5 L232 1.5" stroke="#fff" fill="none" opacity=".8"/><text x="233" y="12.5" font-family="Liberation Sans" font-size="12" fill="#3a3a4a">Лист10</text><path d="M281 15.5 L291 1.5" stroke="#8d96a1" fill="none"/><path d="M283 15.5 L293 1.5" stroke="#fff" fill="none" opacity=".8"/><text x="294" y="12.5" font-family="Liberation Sans" font-size="12" fill="#3a3a4a">Лист11</text><rect x="344" y="0" width="55" height="15" fill="#fff"/><line x1="344.5" y1="0" x2="344.5" y2="15" stroke="#8d96a1"/><text x="353" y="12.5" font-family="Liberation Sans" font-size="12" font-weight="bold" fill="#333">Лист1</text><path d="M394 15.5 L406 1.5" stroke="#8d96a1" fill="none"/><rect x="406" y="1" width="60" height="14" fill="url(#tg)" /><path d="M394 15.5 L407 15.5 L407 1.5 Z" fill="#e8ebef"/><path d="M394 15.5 L406 1.5" stroke="#8d96a1" fill="none"/><text x="407" y="12.5" font-family="Liberation Sans" font-size="12" fill="#3a3a4a">Лист2</text><path d="M446 15.5 L456 1.5" stroke="#8d96a1" fill="none"/><line x1="0" y1="15.5" x2="480" y2="15.5" stroke="#8d96a1"/><rect x="456.5" y="2.5" width="6" height="11" fill="#fff" stroke="#7d8691"/><line x1="459.5" y1="5" x2="459.5" y2="11" stroke="#555"/></svg>

<!-- Status bar -->
<div class="a" style="left:3px;top:600px;width:881px;height:1px;background:#5f6b7b"></div><div class="a" style="left:2px;top:601px;width:883px;height:1px;background:rgba(255,255,255,.55)"></div><div class="a" style="left:0;top:606px;width:890px;height:1px;background:rgba(255,255,255,.7)"></div>
<div class="a" style="left:0;top:0;width:891px;height:607px;border-right:1px solid #1a1d24;pointer-events:none"></div>
<div class="a" style="left:884px;top:49px;width:1px;height:552px;background:rgba(255,255,255,.55)"></div><div class="a" style="left:889px;top:0px;width:1px;height:606px;background:rgba(255,255,255,.7)"></div>
<div class="a" style="left:0;top:606px;width:2px;height:1px;background:#111"></div>
<div class="a" style="left:4px;top:578px;width:879px;height:22px;background:linear-gradient(#e3e6ea,#d5d9de 50%,#c9cdd3);border-top:1px solid #8d96a1"></div>
<div class="t" style="left:12px;top:583px;font-size:11.5px;color:#3a3a4a">Готово</div>
<div class="a" style="left:58px;top:580px;width:1px;height:19px;background:#9aa1aa;box-shadow:1px 0 0 #f4f5f7"></div>
<div class="a" style="left:68px;top:583px;width:15px;height:12px;border:1px solid #4a6a9a;background:linear-gradient(#5b86c8 0 3px,transparent 3px),repeating-linear-gradient(#9ab 0 1px,#fff 1px 3px)"></div>
<div class="a" style="left:67px;top:581px;width:6px;height:6px;border-radius:50%;background:#d9452a"></div>
<div class="a" style="left:93px;top:580px;width:1px;height:19px;background:#9aa1aa;box-shadow:1px 0 0 #f4f5f7"></div>
<div class="a" style="left:626px;top:580px;width:1px;height:19px;background:#9aa1aa;box-shadow:1px 0 0 #f4f5f7"></div><div class="a" style="left:630px;top:580px;width:20px;height:18px;border:1px solid #e0b24c;background:linear-gradient(#fde7a4,#f9cf62)"></div>
<div class="a" style="left:634px;top:584px;width:12px;height:10px;border:1px solid #555;background:repeating-linear-gradient(90deg,#555 0 1px,transparent 1px 4px),repeating-linear-gradient(#555 0 1px,#fff 1px 3px)"></div>
<div class="a" style="left:653px;top:584px;width:12px;height:10px;border:1px solid #555;background:#fff"></div>
<div class="a" style="left:656px;top:586px;width:6px;height:6px;border:1px solid #777"></div>
<div class="a" style="left:672px;top:584px;width:12px;height:10px;border:1px solid #555;background:linear-gradient(90deg,#fff 45%,#555 45% 55%,#fff 55%)"></div>
<div class="t" style="left:695px;top:583px;font-size:11.5px;color:#333">100%</div>
<div class="a" style="left:732px;top:581px;width:15px;height:15px;border-radius:50%;border:1px solid #666;background:radial-gradient(#fff,#dde)"></div>
<div class="a" style="left:736px;top:588px;width:7px;height:2px;background:#333"></div>
<div class="a" style="left:747px;top:588px;width:101px;height:2px;background:#9aa3ad;border-bottom:1px solid #fff"></div>
<div class="a" style="left:798px;top:582px;width:1px;height:14px;background:#777"></div>
<div class="a" style="left:793px;top:580px;width:11px;height:15px;clip-path:polygon(0 0,100% 0,100% 65%,50% 100%,0 65%);background:#666"></div>
<div class="a" style="left:794px;top:581px;width:9px;height:13px;clip-path:polygon(0 0,100% 0,100% 65%,50% 100%,0 65%);background:linear-gradient(#fff,#d8dee6)"></div>
<div class="a" style="left:848px;top:581px;width:15px;height:15px;border-radius:50%;border:1px solid #666;background:radial-gradient(#fff,#dde)"></div>
<div class="a" style="left:852px;top:588px;width:7px;height:2px;background:#333"></div>
<div class="a" style="left:855px;top:585px;width:2px;height:8px;background:#333"></div>
<div class="a" style="left:871px;top:586px;width:12px;height:12px;background:radial-gradient(circle,#9aa 1px,transparent 1.5px) 0 0/3px 3px;clip-path:polygon(100% 0,100% 100%,0 100%)"></div>


<!-- horizontal scrollbar -->
<div class="a" style="left:531px;top:563px;width:336px;height:14px;background:linear-gradient(#e6e9ed,#f3f5f7)"></div>
<svg class="a" style="left:533px;top:564px" width="10" height="12" viewBox="0 0 10 12"><path d="M7 2 L3 6 L7 10 Z" fill="#3a414b"/></svg>
<div class="a" style="left:547px;top:564px;width:204px;height:13px;border:1px solid #a3abb5;border-radius:2px;background:linear-gradient(#fbfcfd,#e3e7ec)"></div>
<div class="a" style="left:645px;top:567px;width:6px;height:7px;background:repeating-linear-gradient(90deg,#777 0 1px,transparent 1px 2px)"></div>
<svg class="a" style="left:846px;top:564px" width="10" height="12" viewBox="0 0 10 12"><path d="M3 2 L7 6 L3 10 Z" fill="#3a414b"/></svg>
<div class="a" style="left:859px;top:564px;width:7px;height:12px;border:1px solid #8d96a1;background:#fff"></div>
<div class="a" style="left:867px;top:563px;width:16px;height:14px;background:#e2e6eb"></div>

<!-- vertical scrollbar details -->
<div class="a" style="left:868px;top:166px;width:14px;height:6px;border:1px solid #7d8691;background:#fff"></div>
<div class="a" style="left:871px;top:168px;width:8px;height:1px;background:#666"></div>
<div class="a" style="left:868px;top:173px;width:15px;height:16px;background:linear-gradient(90deg,#e4e7eb,#eef0f3)"></div><div class="a" style="left:870px;top:178px;width:0;height:0;border-left:5px solid transparent;border-right:5px solid transparent;border-bottom:5px solid #444"></div>
<div class="a" style="left:868px;top:190px;width:15px;height:148px;border:1px solid #9ea6b0;border-radius:2px;background:linear-gradient(90deg,#f7f8fa,#e6e9ed)"></div><div class="a" style="left:872px;top:260px;width:7px;height:7px;background:repeating-linear-gradient(#7a828c 0 1px,transparent 1px 2px)"></div>
<div class="a" style="left:870px;top:551px;width:0;height:0;border-left:5px solid transparent;border-right:5px solid transparent;border-top:5px solid #444"></div>

<!-- Freeze button -->
<div class="a" style="left:393px;top:96px;width:137px;height:18px;border:1px solid #d9a84a;border-radius:2px;background:linear-gradient(#fee185,#fed964 60%,#fee187)"></div>
<svg class="a" style="left:396px;top:99px" width="17" height="14" viewBox="0 0 17 14">
<defs><pattern id="hb" width="2.5" height="2.5" patternUnits="userSpaceOnUse" patternTransform="rotate(45)"><rect width="2.5" height="2.5" fill="#b8cdea"/><line x1="0" y1="0" x2="0" y2="2.5" stroke="#fff" stroke-width="1"/></pattern></defs>
<rect x="0.5" y="0.5" width="15" height="12" fill="#f4f7fb" stroke="#2b3d5e"/>
<rect x="1" y="1" width="15" height="3" fill="url(#hb)"/><rect x="1" y="1" width="4.5" height="12" fill="url(#hb)"/>
<rect x="6" y="4.5" width="4.5" height="2.5" fill="#9db8dc"/>
<g stroke="#2b3d5e"><line x1="5.5" y1="0" x2="5.5" y2="13"/><line x1="10.5" y1="0" x2="10.5" y2="13"/><line x1="0" y1="4.5" x2="16" y2="4.5"/><line x1="0" y1="7.5" x2="16" y2="7.5"/><line x1="0" y1="10.5" x2="16" y2="10.5"/></g>
</svg>
<div class="t" style="left:415px;top:100px">Закрепить области</div>
<div class="t" style="left:520px;top:103px;font-size:7px;color:#555">&#9660;</div>

<!-- Dropdown menu -->
<div class="a" style="left:393px;top:118px;width:298px;height:137px;background:#fff;border:1px solid #c6c9ce;box-shadow:2px 2px 2px rgba(0,0,0,.18)"></div>
<div class="t" style="left:447px;top:123px;font-weight:bold;font-size:11.5px;color:#222;transform:scaleX(.96);transform-origin:0 0"><u>З</u>акрепить области</div>
<div class="t" style="left:447px;top:137px;color:#333;line-height:13px">Выделенные строки и столбцы всегда будут<br>видны на экране во время прокрутки листа</div>
<div class="t" style="left:447px;top:167px;font-weight:bold;font-size:11.5px;color:#222;transform:scaleX(.96);transform-origin:0 0">Закрепить вер<u>х</u>нюю строку</div>
<div class="t" style="left:447px;top:182px;color:#333;line-height:13px">Верхняя строка всегда будет видна на<br>экране во время прокрутки листа.</div>
<div class="t" style="left:447px;top:212px;font-weight:bold;font-size:11.5px;color:#222;transform:scaleX(.96);transform-origin:0 0">Закрепить первы<u>й</u> столбец</div>
<div class="t" style="left:447px;top:226px;color:#333;line-height:13px">Первый столбец всегда будет виден на<br>экране во время прокрутки листа.</div>
<svg class="a" style="left:402px;top:129px" width="30" height="25" viewBox="0 0 30 25">
<defs><pattern id="h1" width="3" height="3" patternUnits="userSpaceOnUse" patternTransform="rotate(45)"><rect width="3" height="3" fill="#a9c3ea"/><line x1="0" y1="0" x2="0" y2="3" stroke="#fff" stroke-width="1.3"/></pattern></defs>
<path d="M0.5 20.5 L0.5 23 Q0.5 24 1.5 24 L8.5 24 Q9.5 24 9.5 23 L9.5 20.5" fill="#eef3fa" stroke="#5b6d8e"/>
<rect x="0.5" y="0.5" width="28.5" height="20.5" fill="#fff" stroke="#5b6d8e"/>
<rect x="1" y="1" width="28" height="3.5" fill="url(#h1)"/><rect x="1" y="1" width="8.5" height="20" fill="url(#h1)"/><rect x="10" y="5" width="9.5" height="3.5" fill="#8fb1e6"/>
<g stroke="#7d8ea9"><line x1="1" y1="4.5" x2="29" y2="4.5"/><line x1="1" y1="8.5" x2="29" y2="8.5"/><line x1="1" y1="12.5" x2="29" y2="12.5"/><line x1="1" y1="16.5" x2="29" y2="16.5"/><line x1="9.5" y1="1" x2="9.5" y2="21"/><line x1="19.5" y1="1" x2="19.5" y2="21"/></g>
<rect x="0.5" y="0.5" width="28.5" height="20.5" fill="none" stroke="#5b6d8e"/>
</svg><svg class="a" style="left:402px;top:173px" width="30" height="25" viewBox="0 0 30 25">
<defs><pattern id="h2" width="3" height="3" patternUnits="userSpaceOnUse" patternTransform="rotate(45)"><rect width="3" height="3" fill="#a9c3ea"/><line x1="0" y1="0" x2="0" y2="3" stroke="#fff" stroke-width="1.3"/></pattern></defs>
<path d="M0.5 20.5 L0.5 23 Q0.5 24 1.5 24 L8.5 24 Q9.5 24 9.5 23 L9.5 20.5" fill="#eef3fa" stroke="#5b6d8e"/>
<rect x="0.5" y="0.5" width="28.5" height="20.5" fill="#fff" stroke="#5b6d8e"/>
<rect x="1" y="1" width="28" height="3.5" fill="url(#h2)"/>
<g stroke="#7d8ea9"><line x1="1" y1="4.5" x2="29" y2="4.5"/><line x1="1" y1="8.5" x2="29" y2="8.5"/><line x1="1" y1="12.5" x2="29" y2="12.5"/><line x1="1" y1="16.5" x2="29" y2="16.5"/><line x1="9.5" y1="1" x2="9.5" y2="21"/><line x1="19.5" y1="1" x2="19.5" y2="21"/></g>
<rect x="0.5" y="0.5" width="28.5" height="20.5" fill="none" stroke="#5b6d8e"/>
</svg><svg class="a" style="left:402px;top:218px" width="30" height="25" viewBox="0 0 30 25">
<defs><pattern id="h3" width="3" height="3" patternUnits="userSpaceOnUse" patternTransform="rotate(45)"><rect width="3" height="3" fill="#a9c3ea"/><line x1="0" y1="0" x2="0" y2="3" stroke="#fff" stroke-width="1.3"/></pattern></defs>
<path d="M0.5 20.5 L0.5 23 Q0.5 24 1.5 24 L8.5 24 Q9.5 24 9.5 23 L9.5 20.5" fill="#eef3fa" stroke="#5b6d8e"/>
<rect x="0.5" y="0.5" width="28.5" height="20.5" fill="#fff" stroke="#5b6d8e"/>
<rect x="1" y="1" width="8.5" height="20" fill="url(#h3)"/>
<g stroke="#7d8ea9"><line x1="1" y1="4.5" x2="29" y2="4.5"/><line x1="1" y1="8.5" x2="29" y2="8.5"/><line x1="1" y1="12.5" x2="29" y2="12.5"/><line x1="1" y1="16.5" x2="29" y2="16.5"/><line x1="9.5" y1="1" x2="9.5" y2="21"/><line x1="19.5" y1="1" x2="19.5" y2="21"/></g>
<rect x="0.5" y="0.5" width="28.5" height="20.5" fill="none" stroke="#5b6d8e"/>
</svg>

<!-- Red outlines -->
<svg class="a" style="left:0;top:0" width="891" height="200" viewBox="0 0 891 200">
<g fill="none" stroke="#e8161e" stroke-width="5" stroke-linejoin="round">
<path d="M451 21.5 L470 21.5 Q477.5 21.5 477.5 29 L477.5 41 Q477.5 48.5 470 48.5 L451 48.5 Q443.5 48.5 443.5 41 L443.5 29 Q443.5 21.5 451 21.5 Z"/>
<path d="M393 94.5 L538 94.5 Q545.5 94.5 545.5 102 L545.5 107.5 Q545.5 114.5 538 114.5 L393 114.5 Q386.5 114.5 386.5 107.5 L386.5 102 Q386.5 94.5 393 94.5 Z"/>
<path d="M399 121 L672 120 Q683.5 120 683.5 131 L683.5 151 Q683.5 161.5 672 162 L402 166 Q387.5 166 387.5 154 L387.5 133 Q387.5 121 399 121 Z"/>
</g></svg>
<!--wm--><svg class="a" style="left:0;top:0;pointer-events:none" width="891" height="607" viewBox="0 0 891 607"><defs><filter id="bl"><feGaussianBlur stdDeviation="0.45"/></filter></defs><g filter="url(#bl)"><text x="0" y="0" transform="translate(26 95) rotate(-19.7)" font-family="Liberation Serif" font-style="italic" font-weight="bold" font-size="16" textLength="191" lengthAdjust="spacingAndGlyphs" fill="#d4ddf6" fill-opacity="0.3" stroke="#6776c4" stroke-opacity="0.26" stroke-width="0.8">Soringpcrepair.com</text><text x="0" y="0" transform="translate(26 216) rotate(-19.7)" font-family="Liberation Serif" font-style="italic" font-weight="bold" font-size="16" textLength="191" lengthAdjust="spacingAndGlyphs" fill="#d4ddf6" fill-opacity="0.3" stroke="#6776c4" stroke-opacity="0.26" stroke-width="0.8">Soringpcrepair.com</text><text x="0" y="0" transform="translate(26 337) rotate(-19.7)" font-family="Liberation Serif" font-style="italic" font-weight="bold" font-size="16" textLength="191" lengthAdjust="spacingAndGlyphs" fill="#d4ddf6" fill-opacity="0.3" stroke="#6776c4" stroke-opacity="0.26" stroke-width="0.8">Soringpcrepair.com</text><text x="0" y="0" transform="translate(26 457) rotate(-19.7)" font-family="Liberation Serif" font-style="italic" font-weight="bold" font-size="16" textLength="191" lengthAdjust="spacingAndGlyphs" fill="#d4ddf6" fill-opacity="0.3" stroke="#6776c4" stroke-opacity="0.26" stroke-width="0.8">Soringpcrepair.com</text><text x="0" y="0" transform="translate(26 578) rotate(-19.7)" font-family="Liberation Serif" font-style="italic" font-weight="bold" font-size="16" textLength="191" lengthAdjust="spacingAndGlyphs" fill="#d4ddf6" fill-opacity="0.3" stroke="#6776c4" stroke-opacity="0.26" stroke-width="0.8">Soringpcrepair.com</text><text x="0" y="0" transform="translate(316 95) rotate(-19.7)" font-family="Liberation Serif" font-style="italic" font-weight="bold" font-size="16" textLength="191" lengthAdjust="spacingAndGlyphs" fill="#d4ddf6" fill-opacity="0.3" stroke="#6776c4" stroke-opacity="0.26" stroke-width="0.8">Soringpcrepair.com</text><text x="0" y="0" transform="translate(316 216) rotate(-19.7)" font-family="Liberation Serif" font-style="italic" font-weight="bold" font-size="16" textLength="191" lengthAdjust="spacingAndGlyphs" fill="#d4ddf6" fill-opacity="0.3" stroke="#6776c4" stroke-opacity="0.26" stroke-width="0.8">Soringpcrepair.com</text><text x="0" y="0" transform="translate(316 337) rotate(-19.7)" font-family="Liberation Serif" font-style="italic" font-weight="bold" font-size="16" textLength="191" lengthAdjust="spacingAndGlyphs" fill="#d4ddf6" fill-opacity="0.3" stroke="#6776c4" stroke-opacity="0.26" stroke-width="0.8">Soringpcrepair.com</text><text x="0" y="0" transform="translate(316 457) rotate(-19.7)" font-family="Liberation Serif" font-style="italic" font-weight="bold" font-size="16" textLength="191" lengthAdjust="spacingAndGlyphs" fill="#d4ddf6" fill-opacity="0.3" stroke="#6776c4" stroke-opacity="0.26" stroke-width="0.8">Soringpcrepair.com</text><text x="0" y="0" transform="translate(316 578) rotate(-19.7)" font-family="Liberation Serif" font-style="italic" font-weight="bold" font-size="16" textLength="191" lengthAdjust="spacingAndGlyphs" fill="#d4ddf6" fill-opacity="0.3" stroke="#6776c4" stroke-opacity="0.26" stroke-width="0.8">Soringpcrepair.com</text><text x="0" y="0" transform="translate(606 95) rotate(-19.7)" font-family="Liberation Serif" font-style="italic" font-weight="bold" font-size="16" textLength="191" lengthAdjust="spacingAndGlyphs" fill="#d4ddf6" fill-opacity="0.3" stroke="#6776c4" stroke-opacity="0.26" stroke-width="0.8">Soringpcrepair.com</text><text x="0" y="0" transform="translate(606 216) rotate(-19.7)" font-family="Liberation Serif" font-style="italic" font-weight="bold" font-size="16" textLength="191" lengthAdjust="spacingAndGlyphs" fill="#d4ddf6" fill-opacity="0.3" stroke="#6776c4" stroke-opacity="0.26" stroke-width="0.8">Soringpcrepair.com</text><text x="0" y="0" transform="translate(606 337) rotate(-19.7)" font-family="Liberation Serif" font-style="italic" font-weight="bold" font-size="16" textLength="191" lengthAdjust="spacingAndGlyphs" fill="#d4ddf6" fill-opacity="0.3" stroke="#6776c4" stroke-opacity="0.26" stroke-width="0.8">Soringpcrepair.com</text><text x="0" y="0" transform="translate(606 457) rotate(-19.7)" font-family="Liberation Serif" font-style="italic" font-weight="bold" font-size="16" textLength="191" lengthAdjust="spacingAndGlyphs" fill="#d4ddf6" fill-opacity="0.3" stroke="#6776c4" stroke-opacity="0.26" stroke-width="0.8">Soringpcrepair.com</text><text x="0" y="0" transform="translate(606 578) rotate(-19.7)" font-family="Liberation Serif" font-style="italic" font-weight="bold" font-size="16" textLength="191" lengthAdjust="spacingAndGlyphs" fill="#d4ddf6" fill-opacity="0.3" stroke="#6776c4" stroke-opacity="0.26" stroke-width="0.8">Soringpcrepair.com</text></g></svg>
</body></html>
